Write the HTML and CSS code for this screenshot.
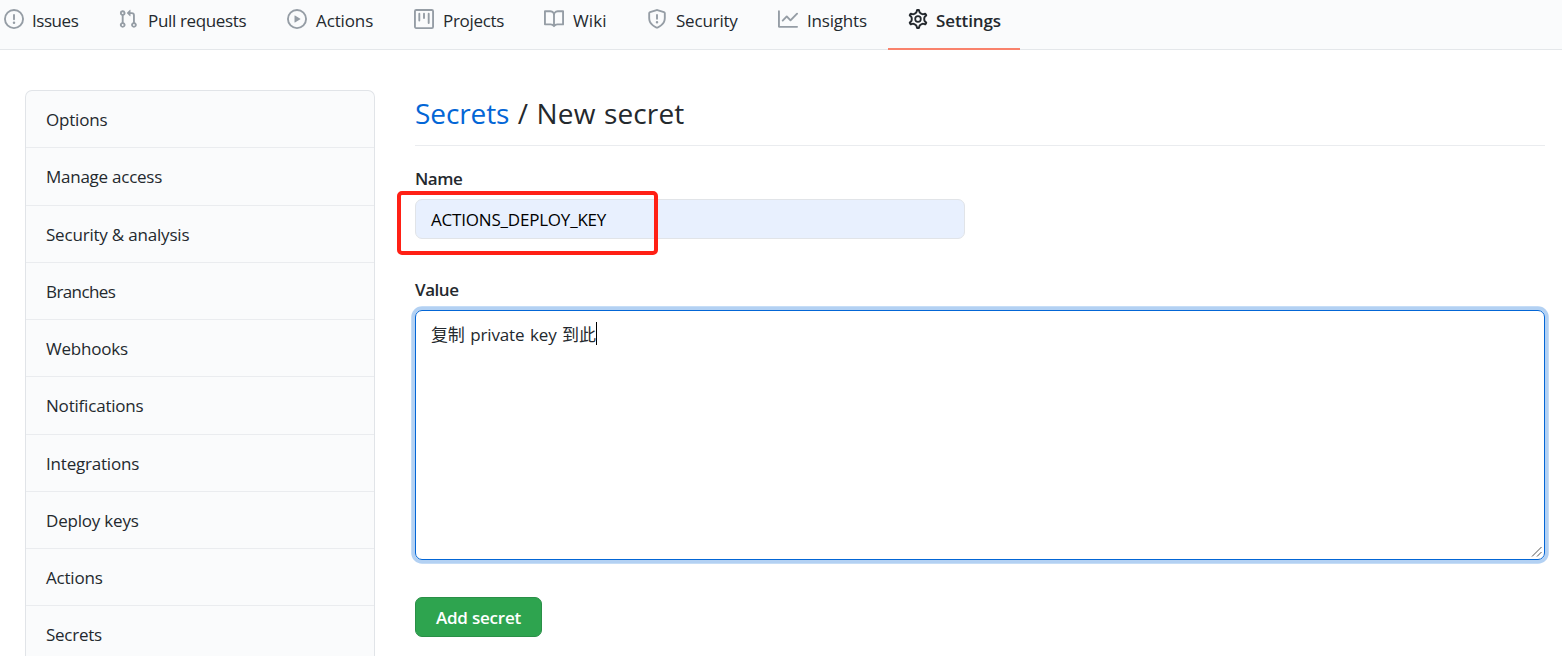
FILE: index.html
```html
<!DOCTYPE html>
<html lang="en">
<head>
<meta charset="utf-8">
<title>New secret</title>
<link rel="stylesheet" href="styles.css">
</head>
<body>
<nav class="repo-nav">
  <a class="tab issues"><svg class="icon" viewBox="0 0 16 16"><path fill-rule="evenodd" d="M8 1.5a6.5 6.5 0 100 13 6.5 6.5 0 000-13zM0 8a8 8 0 1116 0A8 8 0 010 8zm9 3a1 1 0 11-2 0 1 1 0 012 0zm-.25-6.25a.75.75 0 00-1.5 0v3.5a.75.75 0 001.5 0v-3.5z"/></svg><span>Issues</span></a>
  <a class="tab pulls"><svg class="icon" viewBox="0 0 16 16"><path fill-rule="evenodd" d="M7.177 3.073L9.573.677A.25.25 0 0110 .854v4.792a.25.25 0 01-.427.177L7.177 3.427a.25.25 0 010-.354zM3.75 2.5a.75.75 0 100 1.5.75.75 0 000-1.5zm-2.25.75a2.25 2.25 0 113 2.122v5.256a2.251 2.251 0 11-1.5 0V5.372A2.25 2.25 0 011.5 3.25zM11 2.5h-1V4h1a1 1 0 011 1v5.628a2.251 2.251 0 101.5 0V5A2.5 2.5 0 0011 2.5zm1 10.25a.75.75 0 111.5 0 .75.75 0 01-1.5 0zM3.75 12a.75.75 0 100 1.5.75.75 0 000-1.5z"/></svg><span>Pull requests</span></a>
  <a class="tab actions"><svg class="icon" viewBox="0 0 16 16"><path fill-rule="evenodd" d="M1.5 8a6.5 6.5 0 1113 0 6.5 6.5 0 01-13 0zM8 0a8 8 0 100 16A8 8 0 008 0zM6.379 5.227A.25.25 0 006 5.442v5.117a.25.25 0 00.379.214l4.264-2.559a.25.25 0 000-.428L6.379 5.227z"/></svg><span>Actions</span></a>
  <a class="tab projects"><svg class="icon" viewBox="0 0 16 16"><path fill-rule="evenodd" d="M1.75 0A1.75 1.75 0 000 1.75v12.5C0 15.216.784 16 1.75 16h12.5A1.75 1.75 0 0016 14.25V1.75A1.75 1.75 0 0014.25 0H1.75zM1.5 1.75a.25.25 0 01.25-.25h12.5a.25.25 0 01.25.25v12.5a.25.25 0 01-.25.25H1.75a.25.25 0 01-.25-.25V1.75zM11.75 3a.75.75 0 00-.75.75v7.5a.75.75 0 001.5 0v-7.5a.75.75 0 00-.75-.75zm-8.25.75a.75.75 0 011.5 0v5.5a.75.75 0 01-1.5 0v-5.5zM8 3a.75.75 0 00-.75.75v3.5a.75.75 0 001.5 0v-3.5A.75.75 0 008 3z"/></svg><span>Projects</span></a>
  <a class="tab wiki"><svg class="icon" viewBox="0 0 16 16"><path fill-rule="evenodd" d="M0 1.75A.75.75 0 01.75 1h4.253c1.227 0 2.317.59 3 1.501A3.744 3.744 0 0111.006 1h4.245a.75.75 0 01.75.75v10.5a.75.75 0 01-.75.75h-4.507a2.25 2.25 0 00-1.591.659l-.622.621a.75.75 0 01-1.06 0l-.622-.621A2.25 2.25 0 005.258 13H.75a.75.75 0 01-.75-.75V1.75zm8.755 3a2.25 2.25 0 012.25-2.25H14.5v9h-3.757c-.71 0-1.4.201-1.992.572l.004-7.322zm-1.504 7.324l.004-5.073-.002-2.253A2.25 2.25 0 005.003 2.5H1.5v9h3.757a3.75 3.75 0 011.994.574z"/></svg><span>Wiki</span></a>
  <a class="tab security"><svg class="icon" viewBox="0 0 16 16"><path fill-rule="evenodd" d="M7.467.133a1.75 1.75 0 011.066 0l5.25 1.68A1.75 1.75 0 0115 3.48V7c0 1.566-.32 3.182-1.303 4.682-.983 1.498-2.585 2.813-5.032 3.855a1.7 1.7 0 01-1.33 0c-2.447-1.042-4.049-2.357-5.032-3.855C1.32 10.182 1 8.566 1 7V3.48a1.75 1.75 0 011.217-1.667l5.25-1.68zm.61 1.429a.25.25 0 00-.153 0l-5.25 1.68a.25.25 0 00-.174.238V7c0 1.358.275 2.666 1.057 3.86.784 1.194 2.121 2.34 4.366 3.297a.2.2 0 00.154 0c2.245-.956 3.582-2.104 4.366-3.298C13.225 9.666 13.5 8.36 13.5 7V3.48a.25.25 0 00-.174-.237l-5.25-1.68zM9 10.5a1 1 0 11-2 0 1 1 0 012 0zm-.25-5.75a.75.75 0 10-1.5 0v3a.75.75 0 001.5 0v-3z"/></svg><span>Security</span></a>
  <a class="tab insights"><svg class="icon" viewBox="0 0 16 16"><path fill-rule="evenodd" d="M1.5 1.75a.75.75 0 00-1.5 0v12.5c0 .414.336.75.75.75h14.5a.75.75 0 000-1.5H1.5V1.75zm14.28 2.53a.75.75 0 00-1.06-1.06L10 7.94 7.53 5.47a.75.75 0 00-1.06 0L3.22 8.72a.75.75 0 001.06 1.06L7 7.06l2.47 2.47a.75.75 0 001.06 0l5.25-5.25z"/></svg><span>Insights</span></a>
  <a class="tab settings selected"><svg class="icon gear" viewBox="0 0 16 16"><path transform="translate(8 8) scale(1.115) translate(-8 -8)" d="M7.429 1.525a6.593 6.593 0 011.142 0c.036.003.108.036.137.146l.289 1.105c.147.56.55.967.997 1.189.174.086.341.183.501.29.417.278.97.423 1.53.27l1.102-.303c.11-.03.175.016.195.046.219.31.41.641.573.989.014.031.022.11-.059.19l-.815.806c-.411.406-.562.957-.53 1.456a4.588 4.588 0 010 .582c-.032.499.119 1.05.53 1.456l.815.806c.08.08.073.159.059.19a6.494 6.494 0 01-.573.99c-.02.029-.086.074-.195.045l-1.103-.303c-.559-.153-1.112-.008-1.529.27-.16.107-.327.204-.5.29-.449.222-.851.628-.998 1.189l-.289 1.105c-.029.11-.101.143-.137.146a6.613 6.613 0 01-1.142 0c-.036-.003-.108-.037-.137-.146l-.289-1.105c-.147-.56-.55-.967-.997-1.189a4.502 4.502 0 01-.501-.29c-.417-.278-.97-.423-1.53-.27l-1.102.303c-.11.03-.175-.016-.195-.046a6.492 6.492 0 01-.573-.989c-.014-.031-.022-.11.059-.19l.815-.806c.411-.406.562-.957.53-1.456a4.587 4.587 0 010-.582c.032-.499-.119-1.05-.53-1.456l-.815-.806c-.08-.08-.073-.159-.059-.19a6.44 6.44 0 01.573-.99c.02-.029.086-.075.195-.045l1.103.303c.559.153 1.112.008 1.529-.27.16-.107.327-.204.5-.29.449-.222.851-.628.998-1.189l.289-1.105c.029-.11.101-.143.137-.146z"/><circle cx="8" cy="8" r="2.25"/></svg><span>Settings</span></a>
</nav>
<main class="layout">
  <aside class="menu">
    <a class="menu-item">Options</a>
    <a class="menu-item snug">Manage access</a>
    <a class="menu-item">Security &amp; analysis</a>
    <a class="menu-item tight">Branches</a>
    <a class="menu-item">Webhooks</a>
    <a class="menu-item">Notifications</a>
    <a class="menu-item">Integrations</a>
    <a class="menu-item">Deploy keys</a>
    <a class="menu-item">Actions</a>
    <a class="menu-item snug last">Secrets</a>
  </aside>
  <section class="content">
    <h2 class="title"><a class="title-link">Secrets</a> / New secret</h2>
    <div class="label">Name</div>
    <div class="name-field">
      <div class="input">ACTIONS_DEPLOY_KEY</div>
      <div class="highlight"></div>
    </div>
    <div class="label value-label">Value</div>
    <div class="textarea"><span class="value">复制 private key 到此</span><i class="caret"></i>
      <svg class="grip" viewBox="0 0 12 12"><path d="M1 10.5L10.5 1M6 10.5l4.500-4.500"/></svg>
    </div>
    <button class="submit">Add secret</button>
  </section>
</main>
</body>
</html>
```
FILE: styles.css
```css
* { box-sizing: border-box; }
body {
  margin: 0;
  height: 656px;
  overflow: hidden;
  background: #fff;
  color: #24292e;
  font: 17px/26px "Open Sans", "Noto Sans CJK SC", sans-serif;
  letter-spacing: -0.2px;
}

.repo-nav {
  display: grid;
  grid-template-columns: 114px 169px 127px 130px 103px 131px 130px 132px;
  width: 1578px;
  height: 50px;
  margin-left: -16px;
  background: #fafbfc;
  border-bottom: 1px solid #e4e7ea;
  white-space: nowrap;
}
.tab {
  display: flex;
  align-items: flex-start;
  height: 50px;
  padding: 8px 0 0 20px;
}
.tab.selected { border-bottom: 2px solid #f9826c; font-weight: 600; letter-spacing: -0.1px; }
.tab.issues { letter-spacing: -0.45px; }
.tab.pulls { letter-spacing: -0.35px; }
.tab.pulls .icon { margin-right: 10px; }
.tab.actions { letter-spacing: -0.12px; }
.tab.projects { letter-spacing: -0.3px; }
.tab.wiki { letter-spacing: 0.1px; }
.icon { flex: none; width: 20px; height: 20px; margin: 1px 8px 0 0; fill: #959da5; }
.tab.actions .icon, .tab.projects .icon, .tab.wiki .icon, .tab.security .icon, .tab.insights .icon { margin-right: 9px; }
.gear { fill: none; stroke: #24292e; stroke-width: 1.4; }

.layout {
  display: grid;
  grid-template-columns: 350px 1130px;
  column-gap: 40px;
  padding: 40px 0 0 25px;
}
.menu {
  height: 566px;
  border: 1px solid #e1e4e8;
  border-bottom: 0;
  border-radius: 7px 7px 0 0;
  background: #fafbfc;
}
.menu-item {
  display: block;
  height: 57.25px;
  padding: 16px 20px 14px;
  border-bottom: 1px solid #eaecef;
}
.menu-item.last { height: 49px; padding-bottom: 0; border-bottom: 0; }
.snug { letter-spacing: -0.25px; }
.tight { letter-spacing: -0.6px; }

.title {
  height: 56px;
  margin: 0 0 20px;
  padding-top: 3px;
  border-bottom: 1px solid #eaecef;
  font-size: 28px;
  line-height: 40px;
  font-weight: 400;
  letter-spacing: 0.15px;
  word-spacing: 1px;
}
.title-link { color: #0366d6; letter-spacing: -0.1px; }
.label { height: 33px; font-weight: 600; letter-spacing: -0.45px; }
.name-field { position: relative; height: 78px; }
.input {
  width: 550px;
  height: 40px;
  padding: 7px 15px 5px;
  border: 1px solid #e1e4e8;
  border-radius: 7px;
  background: #e8f0fe;
  color: #000;
}
.highlight {
  position: absolute;
  left: -18px;
  top: -8px;
  width: 261px;
  height: 64px;
  border: 4px solid #ff2015;
  border-radius: 5px;
}
.textarea {
  position: relative;
  display: flex;
  height: 250px;
  padding: 11px 15px;
  border: 1px solid #0366d6;
  border-radius: 7px;
  box-shadow: 0 0 0 3.75px rgba(3, 102, 214, .3);
}
.value { letter-spacing: -0.15px; word-spacing: 1.3px; }
.caret { width: 1px; height: 23px; background: #000; }
.grip {
  position: absolute;
  right: 1px;
  bottom: 1px;
  width: 12px;
  height: 12px;
  fill: none;
  stroke: #555;
  stroke-width: 1;
}
.submit {
  display: block;
  width: 127px;
  height: 40px;
  margin-top: 37px;
  padding: 2px 0 0;
  border: 1px solid #2a8f47;
  border-radius: 7px;
  background: #2ea44f;
  color: #fff;
  font: inherit;
  font-weight: 600;
  letter-spacing: -0.2px;
  line-height: 36px;
}
```
